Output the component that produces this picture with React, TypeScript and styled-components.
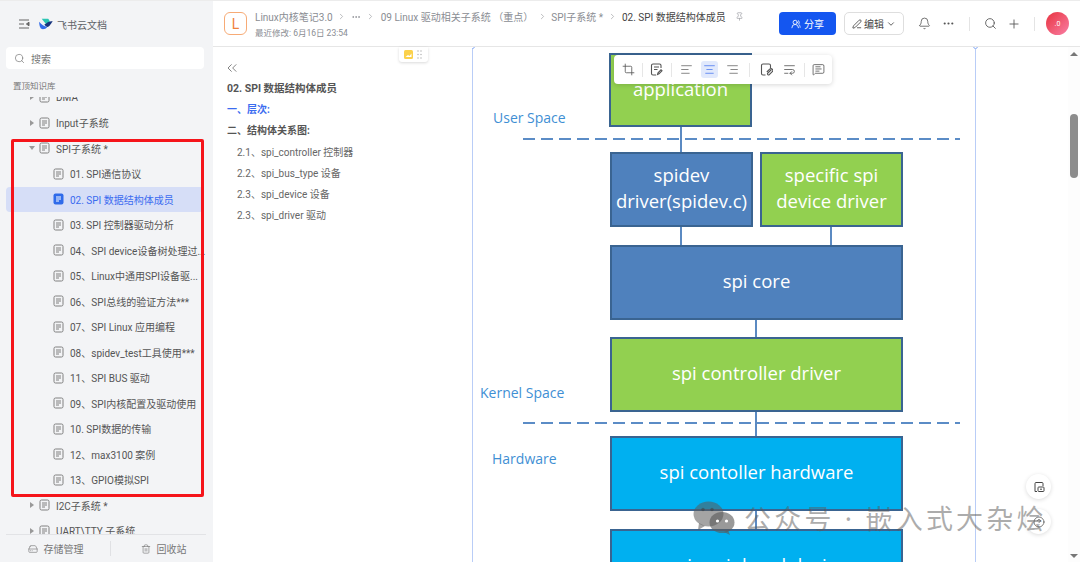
import styled, {createGlobalStyle} from "styled-components";
import {AlignCenter, AlignLeft, AlignRight, Bell, ChevronDown, ChevronRight, ChevronsLeft, CircleHelp, Crop, Ellipsis, HardDrive, MessageSquareText, PenLine, Pin, Plus, Search, Trash2, UsersRound, WrapText} from "lucide-react";

const GlobalStyle = createGlobalStyle`
  html, body {
    margin: 0;
    padding: 0;
    background: #fff;
    overflow: hidden;
  }
  * {
    box-sizing: border-box;
  }
  svg {
    flex-shrink: 0;
  }
`

const Page = styled.div`
  position: relative;
  display: flex;
  width: 1080px;
  height: 562px;
  overflow: hidden;
  border-top: 1px solid #ececec;
  font-family: Roboto, "Noto Sans CJK SC", sans-serif;
  font-size: 10px;
  color: #555;
`
const Sidebar = styled.aside`
  display: flex;
  flex-direction: column;
  flex: 0 0 213px;
  width: 213px;
  min-width: 0;
  overflow: hidden;
  background: #f3f4f6;
`
const SideHead = styled.div`
  display: flex;
  align-items: center;
  gap: 9px;
  height: 46px;
  padding-left: 18px;
  color: #5f6368;
`
const Brand = styled.span`
  margin-left: -5px;
  font-size: 10px;
`
const SearchBox = styled.div`
  display: flex;
  align-items: center;
  gap: 6px;
  height: 22px;
  margin: 0 9px 0 6px;
  padding-left: 8px;
  background: #fff;
  border-radius: 4px;
  color: #777;
`
const PinnedTitle = styled.div`
  margin: 11px 0 0 13px;
  height: 12px;
  line-height: 12px;
  font-size: 8.5px;
  color: #777;
`
const Tree = styled.div`
  flex: 1;
  min-height: 0;
  overflow: hidden;
  margin-top: 5px;
`
const TreeScroller = styled.div`
  margin-top: -12.5px;
`
const Row = styled.div<{level: number, active?: boolean}>`
  display: flex;
  align-items: center;
  height: 25.5px;
  margin-left: 6px;
  margin-right: 9px;
  padding-left: ${({level}) => level === 0 ? 23 : 47}px;
  border-radius: 4px;
  background: ${({active}) => active ? '#d6def7' : 'transparent'};
  color: ${({active}) => active ? '#3b6cf0' : '#555'};
  white-space: nowrap;
`
const Caret = styled.span<{open?: boolean}>`
  width: 0;
  height: 0;
  ${({open}) => open
    ? 'border-left: 3px solid transparent; border-right: 3px solid transparent; border-top: 4px solid #999; margin-right: 4px;'
    : 'border-top: 3px solid transparent; border-bottom: 3px solid transparent; border-left: 4px solid #999; margin-left: 1px; margin-right: 5px;'}
`
const RowText = styled.span`
  margin-left: 6px;
`
const SideFoot = styled.div`
  display: flex;
  align-items: center;
  flex: 0 0 28px;
  margin: 0 7px 0 6px;
  border-top: 1px solid #e2e3e6;
  background: #f3f4f6;
  color: #777;
`
const FootItem = styled.div<{width: number, padding: string}>`
  flex: 0 0 ${({width}) => width}px;
  display: flex;
  align-items: center;
  justify-content: center;
  gap: 6px;
  padding: ${({padding}) => padding};
  & + & {
    border-left: 1px solid #e0e1e4;
  }
`
const HighlightFrame = styled.div`
  position: absolute;
  left: 11px;
  top: 138px;
  width: 193px;
  height: 358px;
  border: 3px solid #f5141a;
  border-radius: 2px;
  pointer-events: none;
`
const Main = styled.main`
  flex: 1;
  display: flex;
  flex-direction: column;
  min-width: 0;
`
const Header = styled.header`
  display: flex;
  align-items: center;
  flex: 0 0 46px;
  padding: 0 11px;
  border-bottom: 1px solid #e6e6e6;
`
const DocLogo = styled.div`
  display: flex;
  align-items: center;
  justify-content: center;
  flex: 0 0 23px;
  height: 23px;
  border: 1px solid #f7ab76;
  border-radius: 6px;
  color: #f0813c;
  font-size: 14px;
`
const Titles = styled.div`
  margin-left: 8px;
  flex: 1;
  min-width: 0;
`
const Crumbs = styled.div`
  display: flex;
  align-items: center;
  height: 14px;
  color: #8a8d93;
  white-space: nowrap;
`
const Crumb = styled.span<{current?: boolean}>`
  color: ${({current}) => current ? '#444' : '#8a8d93'};
`
const CrumbGap = styled.span<{width: number}>`
  display: flex;
  justify-content: center;
  width: ${({width}) => width}px;
  color: #a5a7ab;
`
const Modified = styled.div`
  margin-top: 2px;
  font-size: 8.5px;
  color: #8a8d93;
`
const ShareButton = styled.div`
  display: flex;
  align-items: center;
  justify-content: center;
  flex: 0 0 57px;
  gap: 3px;
  height: 23px;
  border-radius: 4px;
  background: #1456f0;
  color: #fff;
`
const EditButton = styled.div`
  display: flex;
  align-items: center;
  justify-content: center;
  flex: 0 0 60px;
  gap: 2px;
  height: 23px;
  margin-left: 8px;
  border: 1px solid #dedede;
  border-radius: 5px;
  color: #444;
`
const IconSlot = styled.div<{width: number}>`
  display: flex;
  align-items: center;
  justify-content: center;
  flex: 0 0 ${({width}) => width}px;
  min-width: 0;
  color: #555;
`
const HeadDivider = styled.div`
  flex: 0 0 1px;
  height: 14px;
  background: #e4e4e4;
`
const Avatar = styled.div`
  display: flex;
  align-items: center;
  justify-content: center;
  flex: 0 0 23px;
  height: 23px;
  margin-left: 11px;
  border-radius: 50%;
  background: linear-gradient(135deg, #e8333f, #f97fa5);
  color: #fff;
  font-size: 7px;
`
const Body = styled.div`
  flex: 1;
  display: flex;
  min-height: 0;
`
const Toc = styled.nav`
  position: relative;
  flex: 0 0 259px;
  padding: 13px 0 0 14px;
`
const Collapse = styled.div`
  height: 18px;
  margin-left: -3px;
  color: #666;
`
const TocTitle = styled.div`
  height: 21px;
  line-height: 21px;
  font-size: 10.5px;
  font-weight: 700;
  color: #555;
`
const TocHead = styled.div<{active?: boolean}>`
  height: 21.3px;
  line-height: 21.3px;
  font-weight: 700;
  color: ${({active}) => active ? '#3b6cf0' : '#555'};
`
const TocItem = styled.div`
  height: 21.3px;
  line-height: 21.3px;
  padding-left: 10px;
  color: #666;
`
const BlockChip = styled.div`
  position: absolute;
  top: 0;
  right: 44px;
  display: flex;
  align-items: center;
  gap: 4px;
  width: 29px;
  height: 15px;
  padding-left: 5px;
  background: #fff;
  border-radius: 0 0 3px 3px;
  box-shadow: 0 1px 3px rgba(0, 0, 0, 0.15);
`
const Doc = styled.div`
  position: relative;
  flex: 1;
  overflow: hidden;
`
const ImageFrame = styled.div`
  position: absolute;
  left: 0;
  top: 0;
  width: 504px;
  height: 520px;
  border-left: 1px solid #b9cdf7;
  border-right: 1px solid #b9cdf7;
`
const Handle = styled.span<{side: 'left' | 'right'}>`
  position: absolute;
  top: -3px;
  ${({side}) => side}: -3px;
  width: 5px;
  height: 5px;
  border: 1px solid #8fb0f5;
  border-radius: 50%;
  background: #fff;
`
const Node = styled.div<{x: number, y: number, w: number, h: number, fill: string}>`
  position: absolute;
  left: ${({x}) => x}px;
  top: ${({y}) => y}px;
  width: ${({w}) => w}px;
  height: ${({h}) => h}px;
  display: flex;
  align-items: center;
  justify-content: center;
  padding-bottom: 3px;
  text-align: center;
  background: ${({fill}) => fill};
  border: 2px solid #3a6491;
  color: #fff;
  font-family: "Open Sans", sans-serif;
  font-size: 18.5px;
  line-height: 26px;
`
const Wire = styled.div<{x: number, y: number, h: number}>`
  position: absolute;
  left: ${({x}) => x}px;
  top: ${({y}) => y}px;
  width: 2px;
  height: ${({h}) => h}px;
  background: #5b8ac2;
`
const Dashed = styled.div<{y: number}>`
  position: absolute;
  left: 50px;
  top: ${({y}) => y}px;
  width: 437px;
  height: 2px;
  background: repeating-linear-gradient(90deg, #5b8cc6 0 12px, transparent 12px 18px);
`
const SpaceLabel = styled.div<{x: number, y: number}>`
  position: absolute;
  left: ${({x}) => x}px;
  top: ${({y}) => y}px;
  line-height: 20px;
  font-family: "Open Sans", sans-serif;
  font-size: 14px;
  color: #3f8fd4;
  white-space: nowrap;
`
const ImageTools = styled.div`
  position: absolute;
  left: 141px;
  top: 8px;
  display: flex;
  align-items: center;
  width: 218px;
  height: 29px;
  padding-left: 3px;
  background: #fff;
  border-radius: 4px;
  box-shadow: 0 1px 5px rgba(0, 0, 0, 0.16);
  color: #555;
`
const ToolButton = styled.div<{active?: boolean}>`
  display: flex;
  align-items: center;
  justify-content: center;
  flex: 0 0 17px;
  height: 17px;
  margin: 0 3px;
  border-radius: 3px;
  background: ${({active}) => active ? '#e1e9fc' : 'transparent'};
  color: ${({active}) => active ? '#3b6cf0' : '#555'};
`
const ToolDivider = styled.div<{space: number}>`
  flex: 0 0 1px;
  height: 14px;
  margin: 0 ${({space}) => space}px;
  background: #e6e6e6;
`
const RoundButton = styled.div<{y: number}>`
  position: absolute;
  left: 1026px;
  top: ${({y}) => y}px;
  display: flex;
  align-items: center;
  justify-content: center;
  width: 25px;
  height: 25px;
  border-radius: 50%;
  background: #fff;
  box-shadow: 0 1px 4px rgba(0, 0, 0, 0.14);
  color: #444;
`
const Scrollbar = styled.div`
  position: absolute;
  right: 0;
  top: 46px;
  bottom: 0;
  width: 12px;
  background: #fdfdfd;
`
const ScrollArrow = styled.span<{down?: boolean}>`
  position: absolute;
  left: 2px;
  ${({down}) => down ? 'bottom: 4px;' : 'top: 5px;'}
  border-left: 4px solid transparent;
  border-right: 4px solid transparent;
  ${({down}) => down ? 'border-top: 4px solid #777;' : 'border-bottom: 4px solid #777;'}
`
const ScrollThumb = styled.div`
  position: absolute;
  left: 2px;
  top: 67px;
  width: 8px;
  height: 64px;
  border-radius: 4px;
  background: #8c8c8c;
`
const Watermark = styled.div`
  position: absolute;
  left: 693px;
  top: 497px;
  display: flex;
  align-items: center;
  gap: 9px;
  color: rgba(90, 90, 90, 0.5);
  font-family: "Noto Sans", "Noto Sans CJK SC", sans-serif;
  font-size: 27px;
  letter-spacing: 3.2px;
  white-space: nowrap;
  pointer-events: none;
`

function DocIcon({active}: {active?: boolean}) {
    return <svg width="11" height="12" viewBox="0 0 11 12">
        {active
            ? <rect x="0.5" y="0.5" width="10" height="11" rx="2" fill="#2f6bea"/>
            : <rect x="1" y="1" width="9" height="10" rx="1.5" fill="none" stroke="#808080" strokeWidth="1"/>}
        <path d="M3 4h5M3 6h5M3 8h3" stroke={active ? '#fff' : '#808080'} strokeWidth="1" fill="none"/>
    </svg>
}

function MenuIcon() {
    return <svg width="12" height="12" viewBox="0 0 12 12" fill="none" stroke="#666" strokeWidth="1">
        <path d="M1 2h10M1 6h5M1 10h10"/>
        <path d="M11 4.2 8.4 6 11 7.8z" fill="#666"/>
    </svg>
}

function FeishuLogo() {
    return <svg width="14" height="12" viewBox="0 0 16 14">
        <path d="M0 4.5C3 8 5.5 10 9.5 10.5 7.5 13 3 14.5 1.5 11.5.5 9.5 0 7 0 4.5z" fill="#2f6bea"/>
        <path d="M3 1h7.5c1.2 1.2 1.6 2.4 2 4.2L9 8.5C7 6 5 3.5 3 1z" fill="#2bc5b4"/>
        <path d="M6 7.5c3-1 5-5 10-3.5-2 1.5-3.2 6-6.7 6.5C8 10 7 9 6 7.5z" fill="#17347e"/>
    </svg>
}

function NoteIcon() {
    return <svg width="13" height="13" viewBox="0 0 13 13" fill="none" stroke="#555" strokeWidth="1.1">
        <path d="M6 12H3a1.5 1.5 0 0 1-1.5-1.5v-8A1.5 1.5 0 0 1 3 1h6.5A1.5 1.5 0 0 1 11 2.500V5"/>
        <path d="M4 4h5M4 6.500h3.500"/>
        <path d="M7.500 11.500 8 9.800l3-3 1 1-3 3z"/>
    </svg>
}

function DocClipIcon() {
    return <svg width="13" height="13" viewBox="0 0 13 13" fill="none" stroke="#555" strokeWidth="1.1">
        <path d="M10.500 5V2.500A1.500 1.500 0 0 0 9 1H3a1.500 1.500 0 0 0-1.500 1.500v8A1.500 1.500 0 0 0 3 12h2.500"/>
        <path d="M11.500 6.500 7.800 10.200a1 1 0 0 0 1.500 1.400l3-3a1.800 1.800 0 0 0-2.600-2.500L6.800 9"/>
    </svg>
}

function SaveDocIcon() {
    return <svg width="12" height="12" viewBox="0 0 12 12" fill="none" stroke="#444" strokeWidth="1">
        <path d="M2 10.500V2.500A1 1 0 0 1 3 1.500h6a1 1 0 0 1 1 1V5"/>
        <path d="M2 10.500h2"/>
        <rect x="5" y="6" width="6" height="4.500" rx=".8"/>
        <path d="M7 8.200h2"/>
    </svg>
}

function WeChatMark() {
    return <svg width="42" height="34" viewBox="0 0 42 34">
        <ellipse cx="15.5" cy="13" rx="15" ry="12.500" fill="rgba(90,90,90,0.55)"/>
        <path d="M6 22 5 29l7-4z" fill="rgba(90,90,90,0.55)"/>
        <ellipse cx="29" cy="21.500" rx="12.500" ry="10.500" fill="rgba(90,90,90,0.62)"/>
        <path d="M35 29l2 5-6-3z" fill="rgba(90,90,90,0.62)"/>
        <circle cx="10" cy="8.500" r="1.700" fill="rgba(60,60,60,0.5)"/>
        <circle cx="19" cy="8.500" r="1.700" fill="rgba(60,60,60,0.5)"/>
        <circle cx="24.500" cy="20" r="1.600" fill="#fff"/>
        <circle cx="33.500" cy="20" r="1.600" fill="#fff"/>
    </svg>
}

const subDocs = [
    '01. SPI通信协议',
    '02. SPI 数据结构体成员',
    '03. SPI 控制器驱动分析',
    '04、SPI device设备树处理过...',
    '05、Linux中通用SPI设备驱...',
    '06、SPI总线的验证方法***',
    '07、SPI Linux 应用编程',
    '08、spidev_test工具使用***',
    '11、SPI BUS 驱动',
    '09、SPI内核配置及驱动使用',
    '10. SPI数据的传输',
    '12、max3100 案例',
    '13、GPIO模拟SPI',
]

const tocItems = [
    '2.1、spi_controller 控制器',
    '2.2、spi_bus_type 设备',
    '2.3、spi_device 设备',
    '2.3、spi_driver 驱动',
]

export default function App() {
    return <Page>
        <GlobalStyle/>
        <Sidebar>
            <SideHead>
                <MenuIcon/>
                <FeishuLogo/>
                <Brand>飞书云文档</Brand>
            </SideHead>
            <SearchBox>
                <Search size={11} strokeWidth={1.5}/>
                搜索
            </SearchBox>
            <PinnedTitle>置顶知识库</PinnedTitle>
            <Tree>
                <TreeScroller>
                    <Row level={0}><Caret/><DocIcon/><RowText>DMA</RowText></Row>
                    <Row level={0}><Caret/><DocIcon/><RowText>Input子系统</RowText></Row>
                    <Row level={0}><Caret open/><DocIcon/><RowText>SPI子系统 *</RowText></Row>
                    {subDocs.map((name, i) => <Row key={name} level={1} active={i === 1}>
                        <DocIcon active={i === 1}/><RowText>{name}</RowText>
                    </Row>)}
                    <Row level={0}><Caret/><DocIcon/><RowText>I2C子系统 *</RowText></Row>
                    <Row level={0}><Caret/><DocIcon/><RowText>UART\TTY 子系统</RowText></Row>
                </TreeScroller>
            </Tree>
            <SideFoot>
                <FootItem width={104} padding="0 5px 0 0"><HardDrive size={10} strokeWidth={1.5}/>存储管理</FootItem>
                <FootItem width={96} padding="0 0 0 10px"><Trash2 size={10} strokeWidth={1.5}/>回收站</FootItem>
            </SideFoot>
        </Sidebar>
        <Main>
            <Header>
                <DocLogo>L</DocLogo>
                <Titles>
                    <Crumbs>
                        <Crumb>Linux内核笔记3.0</Crumb>
                        <CrumbGap width={18}><ChevronRight size={9}/></CrumbGap>
                        <Ellipsis size={10}/>
                        <CrumbGap width={20}><ChevronRight size={9}/></CrumbGap>
                        <Crumb>09 Linux 驱动相关子系统 （重点）</Crumb>
                        <CrumbGap width={18}><ChevronRight size={9}/></CrumbGap>
                        <Crumb>SPI子系统 *</Crumb>
                        <CrumbGap width={19}><ChevronRight size={9}/></CrumbGap>
                        <Crumb current>02. SPI 数据结构体成员</Crumb>
                        <CrumbGap width={28}><Pin size={9}/></CrumbGap>
                    </Crumbs>
                    <Modified>最近修改: 6月16日 23:54</Modified>
                </Titles>
                <ShareButton><UsersRound size={10}/>分享</ShareButton>
                <EditButton><PenLine size={10}/>编辑<ChevronDown size={10}/></EditButton>
                <IconSlot width={40}><Bell size={13} strokeWidth={1.5}/></IconSlot>
                <IconSlot width={8}><Ellipsis size={13}/></IconSlot>
                <IconSlot width={17}/>
                <HeadDivider/>
                <IconSlot width={40}><Search size={13} strokeWidth={1.6}/></IconSlot>
                <IconSlot width={8}><Plus size={14} strokeWidth={1.5}/></IconSlot>
                <IconSlot width={16}/>
                <HeadDivider/>
                <Avatar>.0</Avatar>
            </Header>
            <Body>
                <Toc>
                    <BlockChip>
                        <svg width="9" height="9" viewBox="0 0 9 9">
                            <rect width="9" height="9" rx="1.500" fill="#fbd14b"/>
                            <path d="M1.500 7 4 5l1.500 1L7.500 3.500V7z" fill="#fff"/>
                        </svg>
                        <svg width="5" height="9" viewBox="0 0 5 9" fill="#bbb">
                            <circle cx="1" cy="1" r=".8"/><circle cx="4" cy="1" r=".8"/>
                            <circle cx="1" cy="4.500" r=".8"/><circle cx="4" cy="4.500" r=".8"/>
                            <circle cx="1" cy="8" r=".8"/><circle cx="4" cy="8" r=".8"/>
                        </svg>
                    </BlockChip>
                    <Collapse><ChevronsLeft size={16} strokeWidth={1.2}/></Collapse>
                    <TocTitle>02. SPI 数据结构体成员</TocTitle>
                    <TocHead active>一、层次:</TocHead>
                    <TocHead>二、结构体关系图:</TocHead>
                    {tocItems.map(item => <TocItem key={item}>{item}</TocItem>)}
                </Toc>
                <Doc>
                    <ImageFrame>
                        <Handle side="left"/>
                        <Handle side="right"/>
                        <Wire x={207} y={79} h={27}/>
                        <Wire x={207} y={179} h={20}/>
                        <Wire x={357} y={179} h={20}/>
                        <Wire x={282} y={272} h={19}/>
                        <Wire x={282} y={364} h={26}/>
                        <Wire x={282} y={463} h={20}/>
                        <Node x={136} y={6} w={143} h={74} fill="#92d050">application</Node>
                        <Node x={137} y={105} w={143} h={75} fill="#4f81bd">spidev<br/>driver(spidev.c)</Node>
                        <Node x={287} y={105} w={143} h={75} fill="#92d050">specific spi<br/>device driver</Node>
                        <Node x={137} y={198} w={293} h={75} fill="#4f81bd">spi core</Node>
                        <Node x={137} y={290} w={293} h={75} fill="#92d050">spi controller driver</Node>
                        <Node x={137} y={389} w={293} h={75} fill="#00b0f0">spi contoller hardware</Node>
                        <Node x={137} y={482} w={293} h={75} fill="#00b0f0">spi peripheral device</Node>
                        <Dashed y={91}/>
                        <Dashed y={375}/>
                        <SpaceLabel x={20} y={61}>User Space</SpaceLabel>
                        <SpaceLabel x={7} y={336}>Kernel Space</SpaceLabel>
                        <SpaceLabel x={19} y={402}>Hardware</SpaceLabel>
                        <ImageTools>
                            <ToolButton><Crop size={13} strokeWidth={1.5}/></ToolButton>
                            <ToolDivider space={2}/>
                            <ToolButton><NoteIcon/></ToolButton>
                            <ToolDivider space={3}/>
                            <ToolButton><AlignLeft size={13} strokeWidth={1.3}/></ToolButton>
                            <ToolButton active><AlignCenter size={13} strokeWidth={1.3}/></ToolButton>
                            <ToolButton><AlignRight size={13} strokeWidth={1.3}/></ToolButton>
                            <ToolDivider space={5}/>
                            <ToolButton><DocClipIcon/></ToolButton>
                            <ToolButton><WrapText size={13} strokeWidth={1.5}/></ToolButton>
                            <ToolDivider space={2.5}/>
                            <ToolButton><MessageSquareText size={13} strokeWidth={1.5}/></ToolButton>
                        </ImageTools>
                    </ImageFrame>
                </Doc>
            </Body>
        </Main>
        <HighlightFrame/>
        <Scrollbar>
            <ScrollArrow/>
            <ScrollThumb/>
            <ScrollArrow down/>
        </Scrollbar>
        <RoundButton y={473}><SaveDocIcon/></RoundButton>
        <RoundButton y={508}><CircleHelp size={12} strokeWidth={1.4}/></RoundButton>
        <Watermark>
            <WeChatMark/>
            公众号 · 嵌入式大杂烩
        </Watermark>
    </Page>
}
